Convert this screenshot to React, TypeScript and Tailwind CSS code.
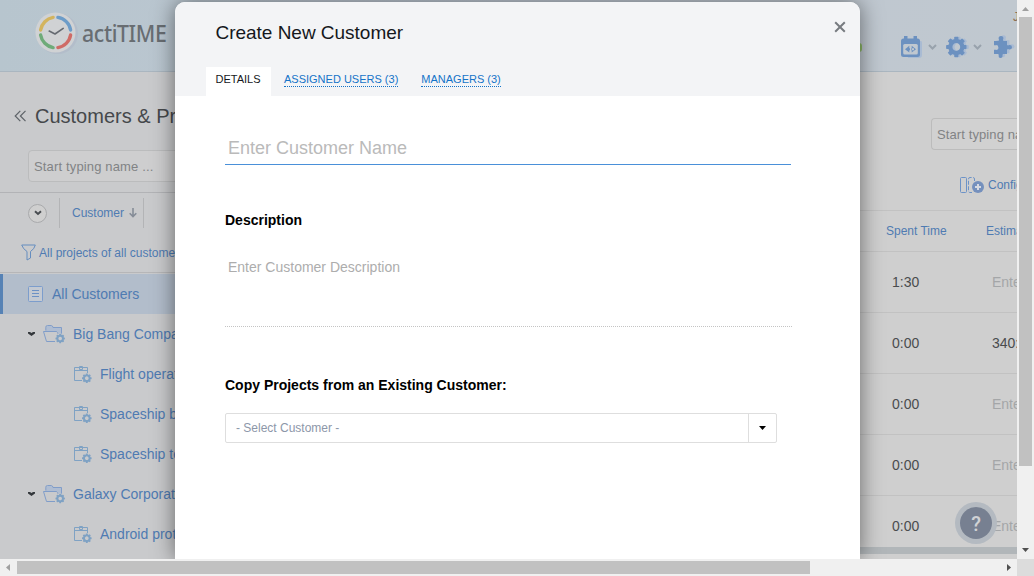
import React from "react";

function GearShape() {
  return (
    <g>
      <circle r="6" fill="none" stroke="currentColor" strokeWidth="4.2" />
      {[0, 45, 90, 135, 180, 225, 270, 315].map((a) => (
        <rect key={a} x="-2.1" y="-10.2" width="4.2" height="4" rx="0.8" fill="currentColor" transform={`rotate(${a})`} />
      ))}
    </g>
  );
}

const PUZZLE =
  "M2 6H6.6Q7.4 5 6.6 3.6Q6.4 1 9 1Q11.6 1 11.4 3.6Q10.6 5 11.4 6H15V10Q16 10.8 17.2 10Q20 9.8 20 12.2Q20 14.6 17.2 14.4Q16 13.6 15 14.6V19H11Q10 20 10.6 21Q10.6 23 8.6 23Q6.4 23 6.6 21Q7.2 20 6.2 19H2V15Q3 14.2 4 15Q6.4 15 6.4 12.4Q6.4 10 4 10Q3 10.8 2 10Z";

function Logo() {
  return (
    <svg className="h-[42px] w-[44px] shrink-0" viewBox="0 0 44 42">
      <circle cx="22.5" cy="21.5" r="20.5" fill="#b3bdca" />
      <circle cx="20.5" cy="20.5" r="20" fill="#d0d2d4" />
      <g fill="none" strokeWidth="3.4" strokeLinecap="round">
        <path d="M5.6 18A15.3 15.3 0 0 1 18.1 5.4" stroke="#d3b45e" />
        <path d="M22.9 5.4A15.3 15.3 0 0 1 35.6 18" stroke="#6c9cc8" />
        <path d="M35.6 23A15.3 15.3 0 0 1 22.9 35.6" stroke="#cf6b66" />
        <path d="M18.1 35.6A15.3 15.3 0 0 1 5.6 23" stroke="#6fab79" />
      </g>
      <path d="M14.2 19L20 22L28.2 16.4" fill="none" stroke="#656a71" strokeWidth="1.6" strokeLinecap="round" strokeLinejoin="round" />
    </svg>
  );
}

function FolderIcon() {
  return (
    <svg className="h-5 w-6 shrink-0 text-[#7fa2c4]" viewBox="0 0 24 20">
      <path d="M3 8V3.5Q3 2 4.5 2H8.5Q9.7 2 10 3.5H18.5V9.5H16L14.5 7.5H3Z" fill="#afbdd2" />
      <path d="M2.8 6.6V3.2Q2.8 1.5 4.5 1.5H8.3Q9.6 1.5 10 3.5H18.5V10M12 17.5H3.5L.5 7.5H13.2Q14.2 7.5 14.6 8.5L15.2 10" fill="none" stroke="#809dc9" />
      <circle cx="17.2" cy="14.5" r="5" fill="#c9cacc" />
      <g transform="translate(17.2 14.5) scale(.46)"><GearShape /></g>
    </svg>
  );
}

function ProjectIcon() {
  return (
    <svg className="h-[18px] w-[18px] shrink-0 text-[#7fa2c4]" viewBox="0 0 18 18">
      <path d="M8 15.5H.5V2.5H13.5V8M.5 5.5H13.5M5.5 4.5V1.5H8.5V4.5Z" fill="none" stroke="currentColor" />
      <circle cx="12.8" cy="13.2" r="5" fill="#c9cacc" />
      <g transform="translate(12.8 13.2) scale(.47)"><GearShape /></g>
    </svg>
  );
}

function CustomerRow({ name }: { name: string }) {
  return (
    <div className="flex h-10 items-center pl-7">
      <svg className="mr-[8px] h-1.5 w-[7px]" viewBox="0 0 7 6">
        <path d="M0 1H2L3.5 2L5 1H7V2.5L3.5 5L0 2.5Z" fill="#34383c" />
      </svg>
      <FolderIcon />
      <span className="ml-[6px] text-[14px] text-[#4f7bb2]">{name}</span>
    </div>
  );
}

function ProjectRow({ name }: { name: string }) {
  return (
    <div className="flex h-10 items-center pl-[74px]">
      <ProjectIcon />
      <span className="ml-2 text-[14px] text-[#4f7bb2]">{name}</span>
    </div>
  );
}

function Chevron() {
  return (
    <svg className="h-2 w-[9px] shrink-0" viewBox="0 0 9 8">
      <path d="M1 2L4.5 5.5L8 2" fill="none" stroke="#98a2ac" strokeWidth="2" />
    </svg>
  );
}

function Header() {
  return (
    <header className="flex h-[72px] shrink-0 items-start border-b border-[#aab6c0] bg-linear-to-r from-[#b7c5ce] via-[#bfc8d3] to-[#c0c8cf]">
      <div className="flex items-center pt-[12px] pl-[35px]">
        <Logo />
        <span className="ml-[3px] w-[86px] font-['Noto_Sans'] text-[23px] leading-[42px] font-medium tracking-[-0.4px] text-[#686d72]">
          <span className="inline-block origin-left scale-x-[.925]">actiTIME</span>
        </span>
      </div>
      <div className="ml-auto flex w-[158px] flex-col overflow-hidden">
        <div className="h-[27px] pt-[9px] pl-[154px] text-[12px] leading-4 text-[#8a6c50]">John</div>
        <div className="flex h-10 items-center">
          <span className="h-[9px] w-[3px] rounded-r-full bg-[#8db868]" />
          <svg className="ml-[39px] h-[22px] w-[22px]" viewBox="0 0 22 22">
            <path d="M3 5H20Q21 5 21 7V19Q21 22 18 22H7Z" fill="#a9bbd3" />
            <rect x="0" y="2.5" width="19" height="18.5" rx="2.5" fill="#6c91c0" />
            <path d="M3 0h3.5v4H3zM12.5 0H16v4h-3.5z" fill="#6c91c0" />
            <rect x="2.2" y="8" width="14.6" height="10.4" rx="1.5" fill="#c0c8d0" />
            <path d="M4 13.2L8.3 9.8V16.6ZM15 13.2L10.7 9.8V16.6ZM6 12.2h7v2H6z" fill="#6c91c0" />
            <path d="M9 11.5h1v3.5H9z" fill="#c0c8d0" />
          </svg>
          <span className="ml-[5px] flex"><Chevron /></span>
          <svg className="ml-[8px] h-6 w-6" viewBox="0 0 24 24">
            <g transform="translate(13.5 12)" className="text-[#a9bbd3]"><GearShape /></g>
            <g transform="translate(11.3 12)" className="text-[#6c91c0]"><GearShape /></g>
          </svg>
          <span className="ml-[4px] flex"><Chevron /></span>
          <svg className="ml-[10px] h-6 w-6 shrink-0" viewBox="0 0 24 24">
            <path d={PUZZLE} fill="#a9bbd3" transform="translate(2.5 -.8)" />
            <path d={PUZZLE} fill="#6c91c0" />
          </svg>
        </div>
      </div>
    </header>
  );
}

function Sidebar() {
  return (
    <aside className="flex w-[516px] shrink-0 flex-col bg-[#c9cacc]">
      <div className="flex h-[78px] items-center pt-[10px] pl-[14px]">
        <svg className="h-3 w-[13px]" viewBox="0 0 13 12">
          <path d="M6.3 .8L1.2 6L6.3 11.2M11.5 .8L6.4 6L11.5 11.2" fill="none" stroke="#5e6368" strokeWidth="1.2" />
        </svg>
        <h1 className="ml-2 text-[20px] leading-6 text-[#45484b]">Customers &amp; Projects</h1>
      </div>
      <div className="flex h-[43px] items-start border-b border-[#b2b3b6] pl-7">
        <div className="flex h-8 w-[230px] items-center rounded-sm border border-[#bbbcbd] bg-[#cececf] pt-[2px] pl-[5px] text-[13px] tracking-[0.15px] text-[#818385]">Start typing name ...</div>
      </div>
      <div className="flex h-10 items-center pl-7">
        <span className="flex size-[19px] items-center justify-center rounded-full border border-[#a9aaac] bg-[#cfcfcf]">
          <svg className="h-2 w-2" viewBox="0 0 8 8"><path d="M1 2.3L4 5L7 2.3" fill="none" stroke="#484c50" strokeWidth="2" /></svg>
        </span>
        <div className="ml-3 flex h-[30px] w-[85px] items-center border-x border-[#b3b4b6] pl-3 text-[12px] text-[#4f7bb2]">
          Customer
          <svg className="ml-[5px] h-2.5 w-2" viewBox="0 0 8 10"><path d="M4 0V8M.7 5.2L4 8.5L7.3 5.2" fill="none" stroke="#858c97" strokeWidth="1.6" /></svg>
        </div>
      </div>
      <div className="flex h-10 items-center border-b border-[#b6b6b8] pl-[21px] text-[12px] text-[#4f7bb2]">
        <svg className="h-[17px] w-[15px]" viewBox="0 0 15 17"><path d="M.7 1H14.3Q13.5 5 9.5 7.5V14L6 16V7.5Q2 5 .7 1Z" fill="none" stroke="#658dbf" /></svg>
        <span className="ml-[3px]">All projects of all customers</span>
      </div>
      <div className="mt-px flex h-10 items-center border-l-[3px] border-[#5682b5] bg-[#b2bdcb] pl-[25px]">
        <svg className="h-4 w-[15px]" viewBox="0 0 15 16"><rect x=".5" y=".5" width="14" height="15" rx="1" fill="#c3c9d2" stroke="#7c9dcc" /><path d="M4 4.5H11M4 7.5H11M4 10.5H11" stroke="#6c91c5" /></svg>
        <span className="ml-[9px] text-[14px] text-[#4f7bb2]">All Customers</span>
      </div>
      <CustomerRow name="Big Bang Company" />
      <ProjectRow name="Flight operations" />
      <ProjectRow name="Spaceship building" />
      <ProjectRow name="Spaceship testing" />
      <CustomerRow name="Galaxy Corporation" />
      <ProjectRow name="Android prototyping" />
    </aside>
  );
}

const rows = [
  { spent: "1:30", estimate: "" },
  { spent: "0:00", estimate: "340:00" },
  { spent: "0:00", estimate: "" },
  { spent: "0:00", estimate: "" },
  { spent: "0:00", estimate: "" },
];

function Tasks() {
  return (
    <main className="flex min-w-0 grow flex-col overflow-hidden bg-[#cfcfcf] whitespace-nowrap">
      <div className="flex h-[90px] shrink-0 items-start justify-end pt-[46px]">
        <div className="flex h-8 w-[86px] items-center overflow-hidden rounded-l-sm border border-r-0 border-[#bcbcbc] bg-[#d1d1d1] pt-[2px] pl-[5px] text-[13px] tracking-[0.1px] text-[#818385]">Start typing name</div>
      </div>
      <div className="flex h-[49px] shrink-0 items-center justify-end border-b border-[#c2c2c2] pb-[2px]">
        <div className="flex w-[57px] shrink-0 items-center text-[12px] text-[#4f7bb2]">
          <svg className="h-4 w-6 shrink-0" viewBox="0 0 24 16">
            <rect x=".5" y=".5" width="6" height="15" rx="1" fill="none" stroke="#6d93c7" />
            <path d="M14.5 4V2Q14.5 .5 13 .5H10Q8.5 .5 8.5 2V14Q8.5 15.5 10 15.5H12" fill="none" stroke="#6d93c7" strokeDasharray="4 1.5" />
            <circle cx="18" cy="10" r="6" fill="#7590bd" />
            <path d="M15 10H21M18 7V13" stroke="#d6dae2" strokeWidth="2" />
          </svg>
          <span className="ml-[4px]">Configure</span>
        </div>
      </div>
      <div className="flex h-[41px] shrink-0 items-center justify-end border-b border-[#c2c2c2] text-[12px] text-[#4f7bb2]">
        <span className="w-[100px] shrink-0">Spent Time</span>
        <span className="w-[31px] shrink-0">Estimate</span>
      </div>
      {rows.map((r, i) => (
        <div key={i} className={`flex h-[61px] shrink-0 items-center justify-end text-[14px] ${i < 4 ? "border-b border-[#c2c2c2]" : ""}`}>
          <span className="w-[100px] shrink-0 text-[#4a4c4e]">{r.spent}</span>
          <span className={`w-[25px] shrink-0 ${r.estimate ? "text-[#4a4c4e]" : "text-[#a4a6a8]"}`}>{r.estimate || "Enter"}</span>
        </div>
      ))}
      <div className="-mt-[10px] h-[7px] shrink-0 bg-[#b1b6b9]" />
    </main>
  );
}

function Dialog() {
  return (
    <section className="absolute top-[2px] left-[175px] flex h-[557px] w-[685px] flex-col rounded-t-[10px] bg-white shadow-[0_0_22px_rgba(0,0,0,0.5)]">
      <div className="flex h-[94px] shrink-0 flex-col justify-between rounded-t-[10px] bg-[#f3f4f6]">
        <div className="flex items-start justify-between pt-[17px] pr-[14px] pl-[40.5px]">
          <h2 className="text-[19px] leading-7 tracking-[-0.02px] text-[#15181c]">Create New Customer</h2>
          <svg className="mt-[2px] h-3 w-3" viewBox="0 0 12 12"><path d="M1.2 1.2L10.8 10.8M10.8 1.2L1.2 10.8" stroke="#777b80" strokeWidth="2" /></svg>
        </div>
        <nav className="flex items-start pl-[31px] text-[11px] leading-[13px]">
          <span className="h-[29px] w-[65px] bg-white pt-[6px] pl-[9.5px] text-[#15181c]">DETAILS</span>
          <span className="mt-[6px] ml-[13px] border-b border-dotted border-[#1473c8] text-[#1473c8]">ASSIGNED USERS (3)</span>
          <span className="mt-[6px] ml-[23px] border-b border-dotted border-[#1473c8] text-[#1473c8]">MANAGERS (3)</span>
        </nav>
      </div>
      <div className="flex flex-col pr-[68px] pl-[50px]">
        <div className="h-[69px] w-[566px] border-b border-[#4a90d9] pt-[40px] pl-[3px] text-[18px] leading-6 text-[#bababa]">Enter Customer Name</div>
        <h3 className="mt-[46px] text-[14px] leading-[18px] font-bold text-black">Description</h3>
        <div className="mt-[30px] h-[68px] w-[567px] border-b border-dotted border-[#c4c4c4] pl-[3px] text-[14px] leading-[17px] text-[#adadad]">Enter Customer Description</div>
        <h3 className="mt-[49px] text-[14px] leading-[18px] font-bold text-black">Copy Projects from an Existing Customer:</h3>
        <div className="mt-[19px] flex h-[30px] w-[552px] items-center rounded-xs border border-[#dedede] text-[12px] text-[#8d97a9]">
          <span className="grow pl-[10px]">- Select Customer -</span>
          <span className="flex h-full w-[28px] items-center justify-center border-l border-[#dedede]">
            <svg className="h-[4px] w-[7px]" viewBox="0 0 7 4"><path d="M0 0H7L3.5 4Z" fill="#000" /></svg>
          </span>
        </div>
      </div>
    </section>
  );
}

export default function App() {
  return (
    <div className="flex h-[576px] w-[1034px] flex-col overflow-hidden font-['Liberation_Sans',sans-serif]">
      <div className="flex h-[559px]">
        <div className="relative flex w-[1017px] flex-col overflow-hidden whitespace-nowrap">
          <Header />
          <div className="flex h-[487px]">
            <Sidebar />
            <Tasks />
          </div>
          <div className="absolute top-[502px] left-[955px] flex size-[42px] items-center justify-center rounded-full bg-[#b4bac1]">
            <span className="flex size-8 items-center justify-center rounded-full bg-[#778091] pt-px font-['Roboto'] text-[20px] font-medium text-[#d0d2d5]">?</span>
          </div>
          <Dialog />
        </div>
        <div className="flex w-[17px] flex-col items-center bg-[#f0f0f0]">
          <svg className="h-[17px] w-[17px] shrink-0" viewBox="0 0 17 17"><path d="M5 11L8.5 7L12 11Z" fill="#a0a0a0" /></svg>
          <div className="h-[449px] w-[13px] bg-[#c1c1c1]" />
          <svg className="mt-auto h-[17px] w-[17px]" viewBox="0 0 17 17"><path d="M5 6L8.5 10L12 6Z" fill="#505050" /></svg>
        </div>
      </div>
      <div className="flex h-[17px] items-center bg-[#f0f0f0]">
        <svg className="h-[17px] w-[17px]" viewBox="0 0 17 17"><path d="M10 5L6 8.5L10 12Z" fill="#a0a0a0" /></svg>
        <div className="h-[13px] w-[793px] bg-[#c1c1c1]" />
        <svg className="ml-auto h-[17px] w-[17px]" viewBox="0 0 17 17"><path d="M7 5L11 8.5L7 12Z" fill="#505050" /></svg>
        <div className="h-[17px] w-[17px] bg-[#dcdcdc]" />
      </div>
    </div>
  );
}
